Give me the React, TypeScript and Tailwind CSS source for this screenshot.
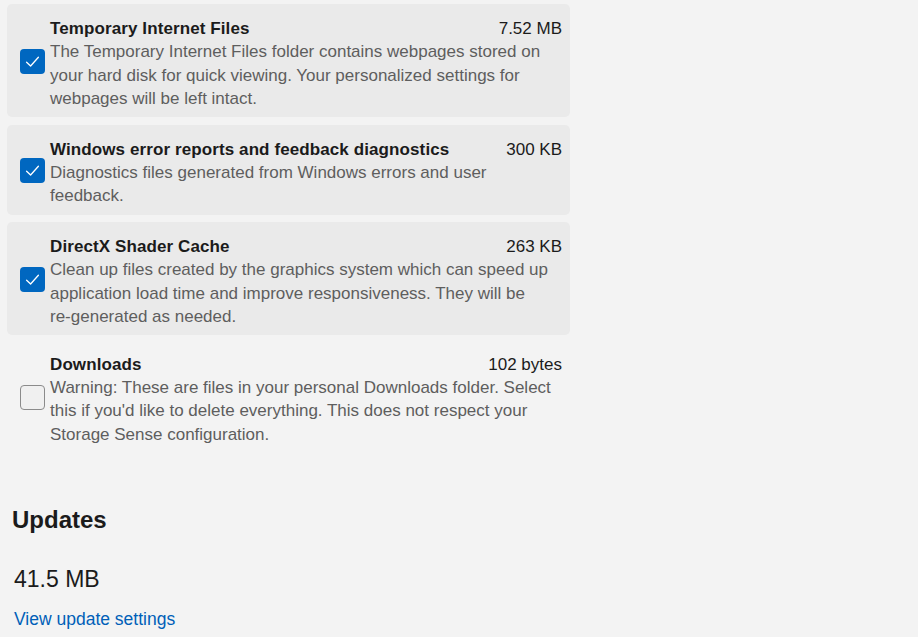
type Item = {
  title: string;
  size: string;
  lines: string[];
  checked: boolean;
};

const items: Item[] = [
  {
    title: "Temporary Internet Files",
    size: "7.52 MB",
    lines: [
      "The Temporary Internet Files folder contains webpages stored on",
      "your hard disk for quick viewing. Your personalized settings for",
      "webpages will be left intact.",
    ],
    checked: true,
  },
  {
    title: "Windows error reports and feedback diagnostics",
    size: "300 KB",
    lines: ["Diagnostics files generated from Windows errors and user", "feedback."],
    checked: true,
  },
  {
    title: "DirectX Shader Cache",
    size: "263 KB",
    lines: [
      "Clean up files created by the graphics system which can speed up",
      "application load time and improve responsiveness. They will be",
      "re-generated as needed.",
    ],
    checked: true,
  },
  {
    title: "Downloads",
    size: "102 bytes",
    lines: [
      "Warning: These are files in your personal Downloads folder. Select",
      "this if you'd like to delete everything. This does not respect your",
      "Storage Sense configuration.",
    ],
    checked: false,
  },
];

function CheckBox({ checked }: { checked: boolean }) {
  if (checked) {
    return (
      <div className="w-[25px] h-[25px] mb-[4px] rounded-[4px] bg-[#0067c0] shrink-0">
        <svg width="25" height="25" viewBox="0 0 25 25" fill="none">
          <path d="M6.6 13.2 L10.6 17 L18.4 8.2" stroke="white" strokeWidth="1.3" strokeLinecap="round" strokeLinejoin="round" />
        </svg>
      </div>
    );
  }
  return <div className="w-[25px] h-[25px] mb-[4px] rounded-[4px] border border-[#8b8b8b] bg-[#f0f0f0] shrink-0" />;
}

function CleanupRow({ item }: { item: Item }) {
  return (
    <div
      className={`flex items-center rounded-[5px] pl-[13px] pr-[8px] pb-[7px] ${
        item.checked ? "bg-[#eaeaea] pt-[13px]" : "pt-[10px]"
      }`}
    >
      <CheckBox checked={item.checked} />
      <div className="flex-1 pl-[5px] leading-[23.3px]">
        <div className="flex justify-between">
          <span className="font-bold text-[#1b1b1b] tracking-[0.1px]">{item.title}</span>
          <span className="text-[#1b1b1b]">{item.size}</span>
        </div>
        {item.lines.map((l, i) => (
          <div key={i} className="text-[#5e5e5e] whitespace-nowrap">
            {l}
          </div>
        ))}
      </div>
    </div>
  );
}

export default function App() {
  return (
    <div
      className="w-full h-[637px] overflow-hidden bg-[#f3f3f3] text-[17px]"
      style={{ fontFamily: '"Liberation Sans", Arial, sans-serif' }}
    >
      <div className="w-[563px] ml-[7px] pt-[4px] flex flex-col gap-[7.5px]">
        {items.map((it) => (
          <CleanupRow key={it.title} item={it} />
        ))}
      </div>

      <div className="pl-[12px] pt-[52px]">
        <h2 className="text-[24px] font-semibold text-[#1b1b1b] leading-[30px]">Updates</h2>
        <div className="pl-[2px] pt-[29px] text-[23px] text-[#1b1b1b] leading-[30px]">41.5 MB</div>
        <a className="pl-[2px] block pt-[13px] text-[17.5px] text-[#005fb8] leading-[24px]">View update settings</a>
      </div>
    </div>
  );
}
